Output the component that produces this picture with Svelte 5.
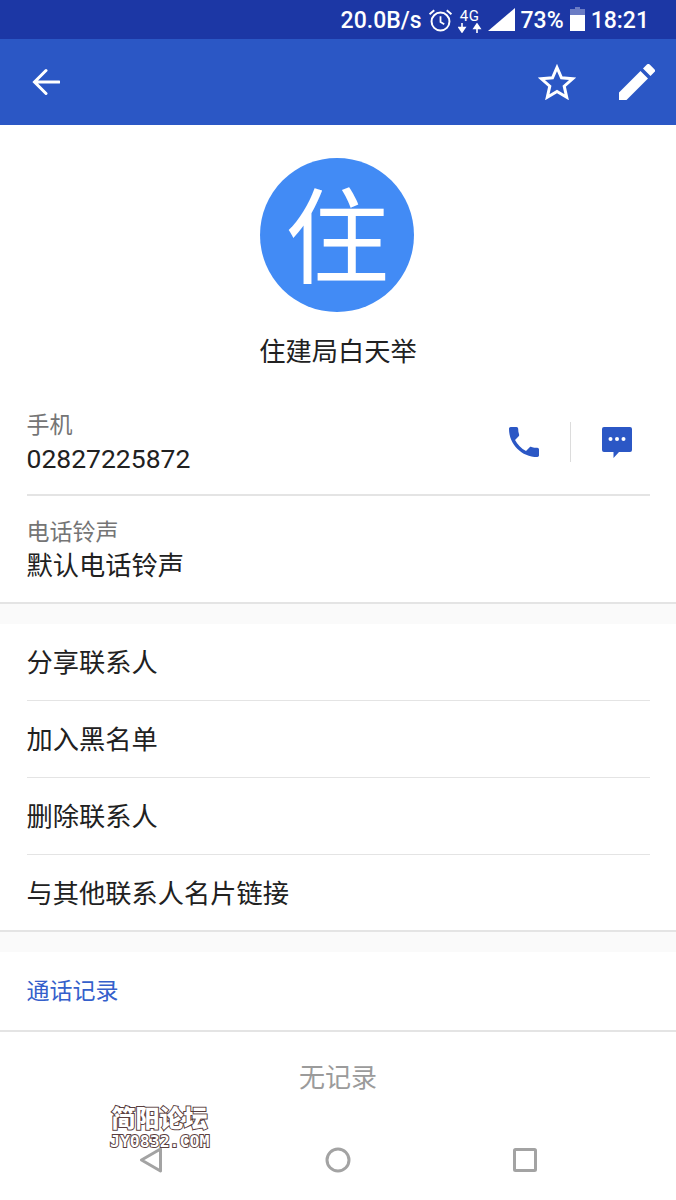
<script>
  const actions = ['分享联系人', '加入黑名单', '删除联系人', '与其他联系人名片链接'];
</script>

<div class="page">
  <header>
    <div class="status">
      <span>20.0B/s</span>
      <svg class="alarm" viewBox="0 0 24 24" width="25" height="25">
        <circle cx="12" cy="13" r="8.6" fill="none" stroke="#fff" stroke-width="1.9" />
        <path d="M12 8v5.4l3.6 2.1" fill="none" stroke="#fff" stroke-width="1.7" />
        <path d="M1.500 6 6 2.200M22.500 6 18 2.200" fill="none" stroke="#fff" stroke-width="1.9" />
      </svg>
      <span class="net">
        <span class="g">4G</span>
        <svg viewBox="0 0 24 10" width="24" height="10">
          <path d="M4 0v5M1 4.500h6L4 9zM19 10V5M16 5.500h6L19 1z" fill="#fff" stroke="#fff" stroke-width="1.6" />
        </svg>
      </span>
      <svg class="signal" viewBox="0 0 27 23" width="27" height="23"><path d="M27 0v23H0z" fill="#fff" /></svg>
      <span>73%</span>
      <svg class="battery" viewBox="0 0 15 24" width="15" height="24">
        <path d="M5 0h5v2h5v6H0V2h5z" fill="#fff" opacity=".35" />
        <path d="M0 8h15v16H0z" fill="#fff" />
      </svg>
      <span>18:21</span>
    </div>
    <div class="toolbar">
      <svg viewBox="0 0 28 28" width="28" height="28">
        <path d="M27 14H3M14 2.500 2.500 14 14 25.500" fill="none" stroke="#fff" stroke-width="3" stroke-linecap="round" />
      </svg>
      <div class="tools">
        <svg viewBox="0 0 38 36" width="38" height="36">
          <path d="m19 3.500 4.500 10.300 11.100 1-8.400 7.400 2.500 11-9.700-5.800-9.700 5.800 2.500-11-8.400-7.400 11.100-1z" fill="none" stroke="#fff" stroke-width="3" stroke-linejoin="miter" />
        </svg>
        <svg viewBox="0 0 36 36" width="36" height="36">
          <path d="M0 28.500V36h7.500L29 14.500 21.500 7zM35.400 8.100a2 2 0 0 0 0-2.800L30.700.6a2 2 0 0 0-2.800 0L24 4.500l7.500 7.500z" fill="#fff" />
        </svg>
      </div>
    </div>
  </header>

  <section class="profile">
    <div class="avatar">住</div>
    <div class="name">住建局白天举</div>
  </section>

  <section class="details">
    <div class="row">
      <div>
        <div class="label">手机</div>
        <div class="number">02827225872</div>
      </div>
      <div class="contact">
        <svg viewBox="0 0 24 24" width="40" height="40">
          <path d="M6.620 10.790c1.440 2.830 3.760 5.140 6.590 6.590l2.200-2.200c.27-.27.67-.36 1.020-.24 1.120.37 2.330.57 3.570.57.550 0 1 .45 1 1V20c0 .55-.45 1-1 1-9.390 0-17-7.610-17-17 0-.55.45-1 1-1h3.500c.55 0 1 .45 1 1 0 1.250.2 2.450.57 3.570.11.350.03.740-.25 1.020z" fill="#2b57c5" />
        </svg>
        <span class="sep"></span>
        <svg class="message" viewBox="0 0 30 32" width="30" height="32">
          <path d="M2 0h26a2 2 0 0 1 2 2v21a2 2 0 0 1-2 2H17l-5.500 6v-6H2a2 2 0 0 1-2-2V2a2 2 0 0 1 2-2z" fill="#2b57c5" />
          <circle cx="8.500" cy="12" r="2" fill="#fff" /><circle cx="15" cy="12" r="2" fill="#fff" /><circle cx="21.500" cy="12" r="2" fill="#fff" />
        </svg>
      </div>
    </div>
    <div class="row ringtone">
      <div>
        <div class="label">电话铃声</div>
        <div class="value">默认电话铃声</div>
      </div>
    </div>
  </section>

  <div class="gap"></div>

  <ul class="actions">
    {#each actions as action}
      <li>{action}</li>
    {/each}
  </ul>

  <div class="gap"></div>

  <div class="calls-title">通话记录</div>
  <div class="empty">无记录</div>

  <nav>
    <svg viewBox="0 0 24 26" width="24" height="26"><path d="M21.500 2 2.500 13l19 11z" fill="none" stroke="#a3a3a3" stroke-width="3" stroke-linejoin="round" /></svg>
    <svg viewBox="0 0 26 26" width="26" height="26"><circle cx="13" cy="13" r="11" fill="none" stroke="#a3a3a3" stroke-width="3" /></svg>
    <svg viewBox="0 0 24 24" width="24" height="24"><rect x="1.500" y="1.500" width="21" height="21" rx="1" fill="none" stroke="#a3a3a3" stroke-width="3" /></svg>
  </nav>

  <div class="mark">
    <div class="mark-cn">简阳论坛</div>
    <div class="mark-en">JY0832.COM</div>
  </div>
</div>

<style>
  :global(body) {
    margin: 0;
    background: #fff;
  }

  .page {
    position: relative;
    width: 676px;
    height: 1200px;
    overflow: hidden;
    background: #fff;
    color: #212121;
    font-family: "Noto Sans CJK SC", "Noto Sans", sans-serif;
  }

  .status {
    height: 39px;
    box-sizing: border-box;
    padding: 2px 27px 0 0;
    background: #1c37a5;
    color: #fff;
    display: flex;
    align-items: center;
    justify-content: flex-end;
    gap: 6px;
    font: 500 23px Roboto, sans-serif;
  }

  .net {
    display: flex;
    flex-direction: column;
    align-items: center;
    margin-left: -1px;
    line-height: 1;
  }

  .g {
    font-size: 15px;
    font-weight: 400;
    line-height: 14px;
    letter-spacing: 0.5px;
  }

  .signal {
    margin-bottom: 3px;
  }

  .battery {
    margin-bottom: 4px;
  }

  .toolbar {
    height: 86px;
    box-sizing: border-box;
    padding: 0 21px 0 32px;
    background: #2b57c5;
    display: flex;
    align-items: center;
    justify-content: space-between;
  }

  .tools {
    display: flex;
    align-items: center;
    gap: 43px;
  }

  .profile {
    display: flex;
    flex-direction: column;
    align-items: center;
    padding-top: 33px;
  }

  .avatar {
    width: 154px;
    height: 154px;
    margin-right: 2px;
    border-radius: 50%;
    background: #428bf5;
    color: #fff;
    font-size: 104px;
    line-height: 146px;
    text-align: center;
  }

  .name {
    margin-top: 19px;
    font-size: 26.25px;
    line-height: 38px;
  }

  .details {
    margin: 19px 26px 0 26.500px;
  }

  .row {
    height: 108px;
    box-sizing: border-box;
    padding-top: 19px;
    display: flex;
    justify-content: space-between;
    border-bottom: 2px solid #e4e4e4;
  }

  .ringtone {
    height: 106px;
    padding-top: 18px;
    border-bottom: 0;
  }

  .label {
    color: #757575;
    font-size: 23px;
    line-height: 32px;
  }

  .number {
    margin-top: 3px;
    font: 26.500px/34px Roboto, sans-serif;
  }

  .value {
    font-size: 26.25px;
    line-height: 36px;
  }

  .contact {
    display: flex;
    align-items: center;
    height: 70px;
    padding-right: 18px;
  }

  .sep {
    width: 1px;
    height: 40px;
    margin: 0 31px 0 26px;
    background: #dcdcdc;
  }

  .message {
    margin-top: 2px;
  }

  .gap {
    height: 20px;
    border-top: 2px solid #e4e4e4;
    background: #fafafa;
  }

  .actions {
    list-style: none;
    margin: 0;
    padding: 0 26px 0 26.500px;
  }

  .actions li {
    height: 77px;
    box-sizing: border-box;
    font-size: 26.25px;
    line-height: 75px;
    border-bottom: 1px solid #e4e4e4;
  }

  .actions li:last-child {
    height: 75px;
    border-bottom: 0;
  }

  .calls-title {
    height: 80px;
    box-sizing: border-box;
    padding-left: 26.500px;
    color: #3560cb;
    font-size: 23px;
    line-height: 75px;
    border-bottom: 2px solid #e4e4e4;
  }

  .empty {
    color: #9b9b9b;
    font-size: 26px;
    line-height: 88px;
    text-align: center;
  }

  nav {
    position: absolute;
    left: 0;
    right: 0;
    top: 1146px;
    height: 28px;
    display: flex;
    align-items: center;
  }

  nav svg:nth-child(1) {
    margin-left: 139px;
  }

  nav svg:nth-child(2) {
    margin-left: 162px;
  }

  nav svg:nth-child(3) {
    margin-left: 162px;
  }

  .mark {
    position: absolute;
    left: 110px;
    top: 1102px;
    width: 99px;
    color: #fff;
    text-align: center;
    font-weight: 900;
    -webkit-text-stroke: 2px #5a3f3f;
    paint-order: stroke fill;
  }

  .mark-cn {
    font-size: 24px;
    line-height: 30px;
  }

  .mark-en {
    font: 700 16.500px/20px "DejaVu Sans Mono", monospace;
  }
</style>
